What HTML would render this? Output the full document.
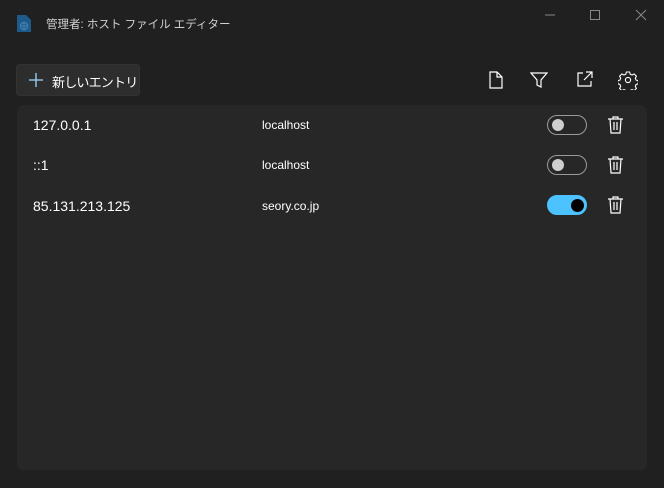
<!DOCTYPE html>
<html><head><meta charset="utf-8"><style>
*{margin:0;padding:0;box-sizing:border-box}
body{width:664px;height:488px;background:#202020;font-family:"Liberation Sans","Noto Sans CJK JP",sans-serif;color:#fff;position:relative;overflow:hidden}
.abs{position:absolute;white-space:nowrap}
.title{left:46px;top:16px;font-size:11.5px;color:#cfcfcf}
.btn{left:16px;top:64px;width:124px;height:32px;background:#2d2d2d;border-radius:4px;border:1px solid #333}
.btn span{position:absolute;left:35px;top:7px;font-size:13px;letter-spacing:-0.8px}
.panel{left:17px;top:105px;width:630px;height:365px;background:#272727;border-radius:6px}
.ip{left:33px;font-size:14px}
.host{left:262px;font-size:12px}
.tg{left:547px;width:40px;height:20px;border-radius:10px;border:1px solid #9a9a9a}
.tg i{position:absolute;left:4px;top:3px;width:12px;height:12px;border-radius:50%;background:#cfcfcf}
.tg.on{background:#4cc2ff;border-color:#4cc2ff}
.tg.on i{left:23px;top:3px;width:13px;height:13px;background:#000}
svg{position:absolute}
</style></head><body>
<svg style="left:17px;top:15px" width="14" height="17" viewBox="0 0 14 17"><path d="M0 0h9l5 5v12H0z" fill="#1e5a8a"/><circle cx="7" cy="11" r="3.5" fill="none" stroke="#4a8ab8" stroke-width="1"/><path d="M3.5 11h7M7 7.5v7" stroke="#4a8ab8" stroke-width="0.8"/></svg>
<div class="abs title">管理者: ホスト ファイル エディター</div>
<svg style="left:540px;top:8px" width="110" height="14" viewBox="0 0 110 14"><path d="M5 7h10" stroke="#888"/><rect x="50.5" y="2.5" width="9" height="9" fill="none" stroke="#888"/><path d="M96 2l10 10M106 2l-10 10" stroke="#888"/></svg>
<div class="abs btn"><svg style="left:12px;top:8px" width="14" height="14"><path d="M7 0v14M0 7h14" stroke="#9ad8ff" stroke-width="1.3"/></svg><span>新しいエントリ</span></div>
<svg style="left:488px;top:71px" width="16" height="18" viewBox="0 0 16 18" fill="none" stroke="#fff" stroke-width="1.2"><path d="M2 1h7l5 5v11H2z M9 1v5h5"/></svg>
<svg style="left:530px;top:71px" width="18" height="18" viewBox="0 0 18 18" fill="none" stroke="#fff" stroke-width="1.2"><path d="M1 2h16l-6 7v7l-4-2V9z"/></svg>
<svg style="left:576px;top:71px" width="17" height="17" viewBox="0 0 17 17" fill="none" stroke="#fff" stroke-width="1.2"><path d="M7 2H2v13h13v-5M10 1h6v6M16 1L8 9"/></svg>
<svg style="left:618px;top:70px" width="20" height="20" viewBox="-10 -10 20 20" fill="none" stroke="#fff" stroke-width="1.1"><circle r="2.6"/><path d="M-1.6-8h3.2l.6 2.2 1.9.8 2-1.1 2.3 2.3-1.1 2 .8 1.9 2.2.6v3.2l-2.2.6-.8 1.9 1.1 2-2.3 2.3-2-1.1-1.9.8-.6 2.2h-3.2l-.6-2.2-1.9-.8-2 1.1-2.3-2.3 1.1-2-.8-1.9-2.2-.6v-3.2l2.2-.6.8-1.9-1.1-2 2.3-2.3 2 1.1 1.900-.8z"/></svg>
<div class="abs panel"></div>
<div class="abs ip" style="top:117px">127.0.0.1</div><div class="abs host" style="top:118px">localhost</div>
<div class="abs ip" style="top:157px">::1</div><div class="abs host" style="top:158px">localhost</div>
<div class="abs ip" style="top:198px">85.131.213.125</div><div class="abs host" style="top:199px">seory.co.jp</div>
<div class="abs tg" style="top:115px"><i></i></div>
<div class="abs tg" style="top:155px"><i></i></div>
<div class="abs tg on" style="top:195px"><i></i></div>
<svg style="left:607px;top:116px" width="17" height="18" viewBox="0 0 17 18" fill="none" stroke="#fff" stroke-width="1.2"><path d="M1 3h15M6 3V1h5v2M3 3l1 14h9l1-14M7 6v8M10 6v8"/></svg>
<svg style="left:607px;top:156px" width="17" height="18" viewBox="0 0 17 18" fill="none" stroke="#fff" stroke-width="1.2"><path d="M1 3h15M6 3V1h5v2M3 3l1 14h9l1-14M7 6v8M10 6v8"/></svg>
<svg style="left:607px;top:196px" width="17" height="18" viewBox="0 0 17 18" fill="none" stroke="#fff" stroke-width="1.2"><path d="M1 3h15M6 3V1h5v2M3 3l1 14h9l1-14M7 6v8M10 6v8"/></svg>
</body></html>
